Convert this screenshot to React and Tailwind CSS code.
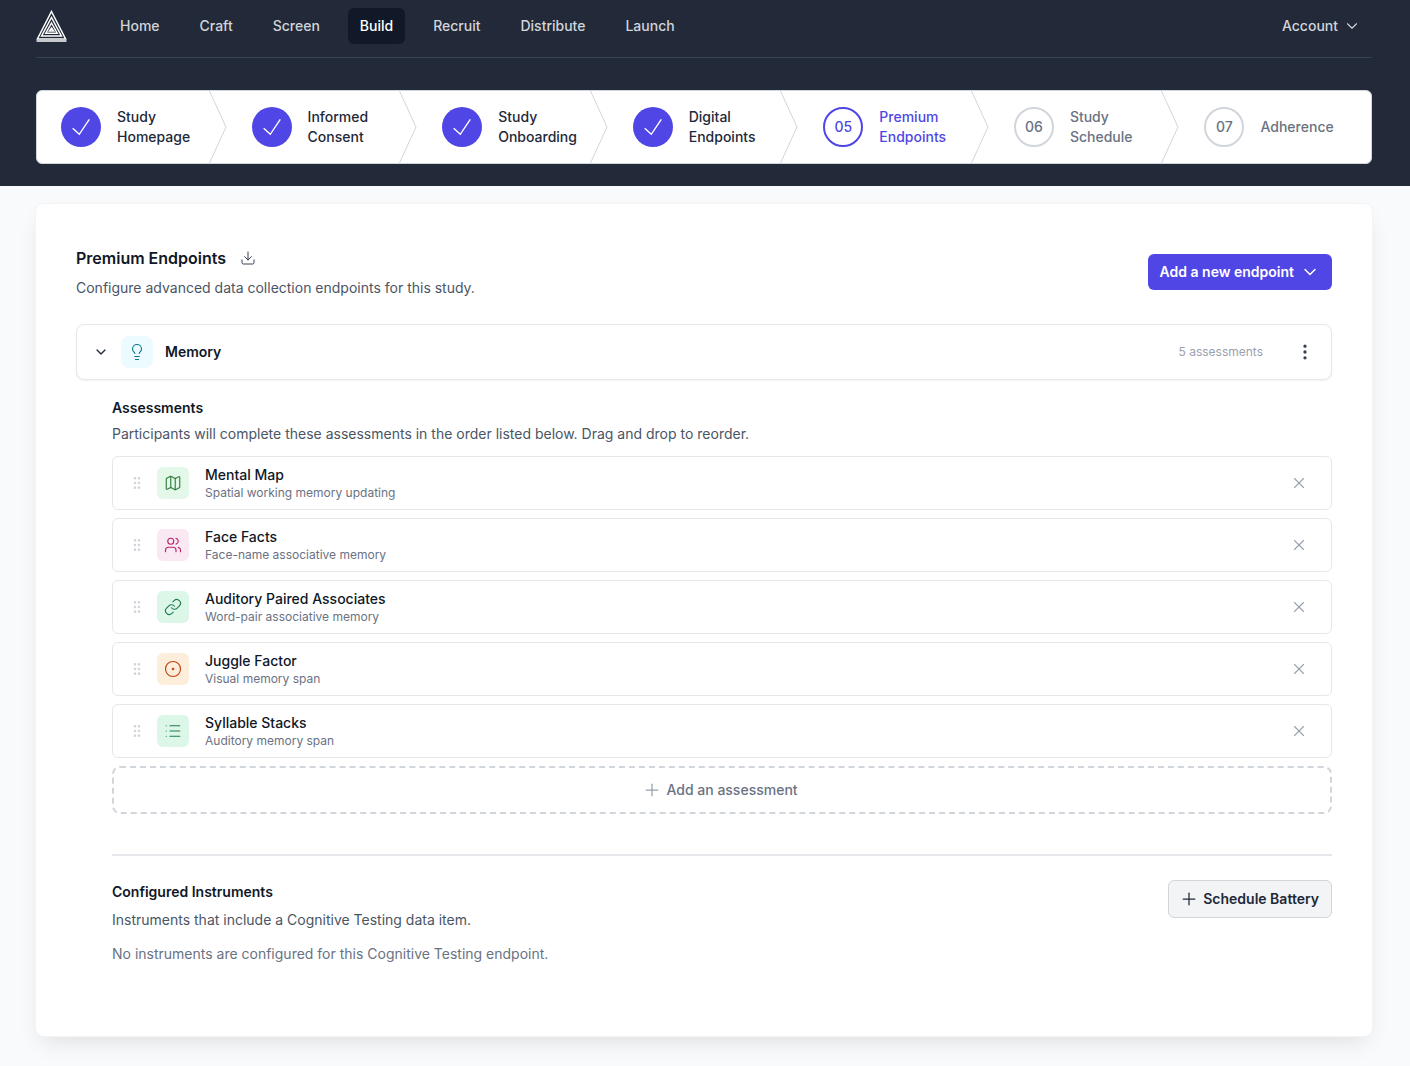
import { ChevronDown, CircleDot, Download, EllipsisVertical, GripVertical, Lightbulb, Link, List, Map, Plus, Users, X } from 'lucide-react';

const navItems = ['Home', 'Craft', 'Screen', 'Build', 'Recruit', 'Distribute', 'Launch'];

const steps = [
  { id: '01', lines: ['Study', 'Homepage'], status: 'done' },
  { id: '02', lines: ['Informed', 'Consent'], status: 'done' },
  { id: '03', lines: ['Study', 'Onboarding'], status: 'done' },
  { id: '04', lines: ['Digital', 'Endpoints'], status: 'done' },
  { id: '05', lines: ['Premium', 'Endpoints'], status: 'current' },
  { id: '06', lines: ['Study', 'Schedule'], status: 'todo' },
  { id: '07', lines: ['Adherence'], status: 'todo' },
];

const assessments = [
  { name: 'Mental Map', desc: 'Spatial working memory updating', Icon: Map, box: 'bg-[#e3f8e8]', color: 'text-[#2f7d3f]' },
  { name: 'Face Facts', desc: 'Face-name associative memory', Icon: Users, box: 'bg-[#fae8f2]', color: 'text-[#b8256b]' },
  { name: 'Auditory Paired Associates', desc: 'Word-pair associative memory', Icon: Link, box: 'bg-[#dcf7e7]', color: 'text-[#1f7a4d]' },
  { name: 'Juggle Factor', desc: 'Visual memory span', Icon: CircleDot, box: 'bg-[#fdeedb]', color: 'text-[#c2410c]' },
  { name: 'Syllable Stacks', desc: 'Auditory memory span', Icon: List, box: 'bg-[#dcf7e7]', color: 'text-[#1f7a4d]' },
];

const Logo = () => (
  <svg width="31" height="32" viewBox="0 0 31 32" fill="none" stroke="white" strokeWidth="1.5">
    <path d="M15.5 1.5 L29.6 29 H1.4 Z" />
    <path d="M15.5 7.5 L25.4 26 H5.6 Z" />
    <path d="M15.5 13 L21.2 23.2 H9.8 Z" />
    <path d="M15.5 18 L17.6 21 H13.4 Z" />
    <path d="M0.5 31 H30.5" />
  </svg>
);

const Step = ({ step, last }) => (
  <div className="relative flex flex-1 items-center gap-4 pl-6">
    {step.status === 'done' && (
      <div className="flex h-10 w-10 shrink-0 items-center justify-center rounded-full bg-[#4f46e5]">
        <svg className="h-6 w-6" viewBox="0 0 24 24" fill="none" stroke="white" strokeWidth="1.4">
          <path d="M3.7 13.3 L10.3 19.3 L20.3 4.3" />
        </svg>
      </div>
    )}
    {step.status === 'current' && (
      <div className="flex h-10 w-10 shrink-0 items-center justify-center rounded-full border-2 border-[#4f46e5] text-sm font-medium text-[#4f46e5]">
        {step.id}
      </div>
    )}
    {step.status === 'todo' && (
      <div className="flex h-10 w-10 shrink-0 items-center justify-center rounded-full border-2 border-gray-300 text-sm font-medium text-gray-500">
        {step.id}
      </div>
    )}
    <div className={`text-sm leading-5 font-medium ${step.status === 'done' ? 'text-gray-800' : step.status === 'current' ? 'text-[#4f46e5]' : 'text-gray-500'}`}>
      {step.lines.map((line) => (
        <div key={line}>{line}</div>
      ))}
    </div>
    {!last && (
      <svg className="absolute top-0 right-[1px] h-full w-[18px]" viewBox="0 0 18 72" preserveAspectRatio="none" fill="none" stroke="#d1d5db" strokeWidth="1">
        <path d="M0.5 0 L17 36 L0.5 72" />
      </svg>
    )}
  </div>
);

const AssessmentRow = ({ item }) => (
  <div className="flex h-[54px] items-center rounded-md border border-gray-200 bg-white pr-[23px] pl-4">
    <GripVertical className="h-4 w-4 text-gray-300" strokeWidth={2} />
    <div className={`ml-3 flex h-8 w-8 items-center justify-center rounded-md ${item.box}`}>
      <item.Icon className={`h-[18px] w-[18px] ${item.color}`} strokeWidth={1.5} />
    </div>
    <div className="ml-4 flex-1 pt-[2px]">
      <div className="text-sm leading-[18px] font-medium text-gray-900">{item.name}</div>
      <div className="text-xs leading-[18px] text-gray-500">{item.desc}</div>
    </div>
    <X className="h-[18px] w-[18px] text-gray-400" strokeWidth={1.5} />
  </div>
);

export default function App() {
  return (
    <div className="min-h-[1066px] bg-[#f9fafb] font-['Inter',sans-serif]">
      <div className="h-[186px] bg-[#222938] pr-[38px] pl-9">
        <div className="flex h-[58px] items-center border-b border-gray-700 pb-[5px]">
          <Logo />
          <nav className="ml-[41px] flex gap-4">
            {navItems.map((item) => (
              <div
                key={item}
                className={`flex h-9 items-center rounded-md px-3 text-sm font-medium ${item === 'Build' ? 'bg-[#111827] text-white' : 'text-gray-300'}`}
              >
                {item}
              </div>
            ))}
          </nav>
          <div className="ml-auto flex items-center gap-[5px] pr-[11px] text-sm font-medium text-gray-300">
            Account
            <ChevronDown className="h-[18px] w-[18px]" strokeWidth={1.5} />
          </div>
        </div>
        <div className="mt-8 flex h-[74px] rounded-md border border-gray-300 bg-white">
          {steps.map((step, i) => (
            <Step key={step.id} step={step} last={i === steps.length - 1} />
          ))}
        </div>
      </div>

      <div className="mt-[18px] mr-[38px] ml-9 h-[832px] rounded-lg bg-white p-10 shadow-[0_0_0_1px_#f3f4f6,0_10px_24px_-6px_rgba(0,0,0,0.12)]">
        <div className="flex items-start justify-between">
          <div>
            <div className="flex items-center gap-[14px] pt-[2px]">
              <h1 className="text-base leading-6 font-semibold text-gray-900">Premium Endpoints</h1>
              <Download className="h-4 w-4 text-gray-700" strokeWidth={1.5} />
            </div>
            <p className="mt-[6px] text-sm leading-6 text-gray-600">Configure advanced data collection endpoints for this study.</p>
          </div>
          <button className="mt-[10px] flex h-9 items-center gap-1.5 rounded-md bg-[#4f46e5] px-3 text-sm font-semibold text-white">
            Add a new endpoint
            <ChevronDown className="h-5 w-5" strokeWidth={1.75} />
          </button>
        </div>

        <div className="mt-6 flex h-14 items-center rounded-lg border border-gray-200 bg-white pr-4 pl-4 shadow-xs">
          <ChevronDown className="h-4 w-4 text-gray-800" strokeWidth={2} />
          <div className="ml-[12px] flex h-8 w-8 items-center justify-center rounded-lg bg-[#ecfbff]">
            <Lightbulb className="h-[18px] w-[18px] text-[#0e7490]" strokeWidth={1.5} />
          </div>
          <div className="ml-3 flex-1 text-sm font-semibold text-gray-900">Memory</div>
          <div className="text-xs text-gray-400">5 assessments</div>
          <EllipsisVertical className="ml-8 h-5 w-5 text-gray-700" strokeWidth={2} />
        </div>

        <div className="pl-9">
          <h2 className="mt-[18px] text-sm leading-5 font-semibold text-gray-900">Assessments</h2>
          <p className="mt-[6px] text-sm leading-5 text-gray-600">Participants will complete these assessments in the order listed below. Drag and drop to reorder.</p>
          <div className="mt-3 flex flex-col gap-2">
            {assessments.map((item) => (
              <AssessmentRow key={item.name} item={item} />
            ))}
            <div className="flex h-12 items-center justify-center gap-1 rounded-lg border-2 border-dashed border-gray-300 pr-1 text-sm font-medium text-gray-500">
              <Plus className="h-5 w-5 text-gray-400" strokeWidth={1.5} />
              Add an assessment
            </div>
          </div>

          <div className="mt-10 border-t-2 border-gray-200" />

          <div className="mt-6 flex items-start justify-between">
            <div>
              <h2 className="mt-[2px] text-sm leading-5 font-semibold text-gray-900">Configured Instruments</h2>
              <p className="mt-2 text-sm leading-5 text-gray-600">Instruments that include a Cognitive Testing data item.</p>
              <p className="mt-[14px] text-sm leading-5 text-gray-500">No instruments are configured for this Cognitive Testing endpoint.</p>
            </div>
            <button className="flex h-[38px] items-center gap-1 rounded-md border border-gray-300 bg-gray-100 pr-3 pl-[10px] text-sm font-semibold text-gray-800">
              <Plus className="h-5 w-5" strokeWidth={1.5} />
              Schedule Battery
            </button>
          </div>
        </div>
      </div>
    </div>
  );
}
